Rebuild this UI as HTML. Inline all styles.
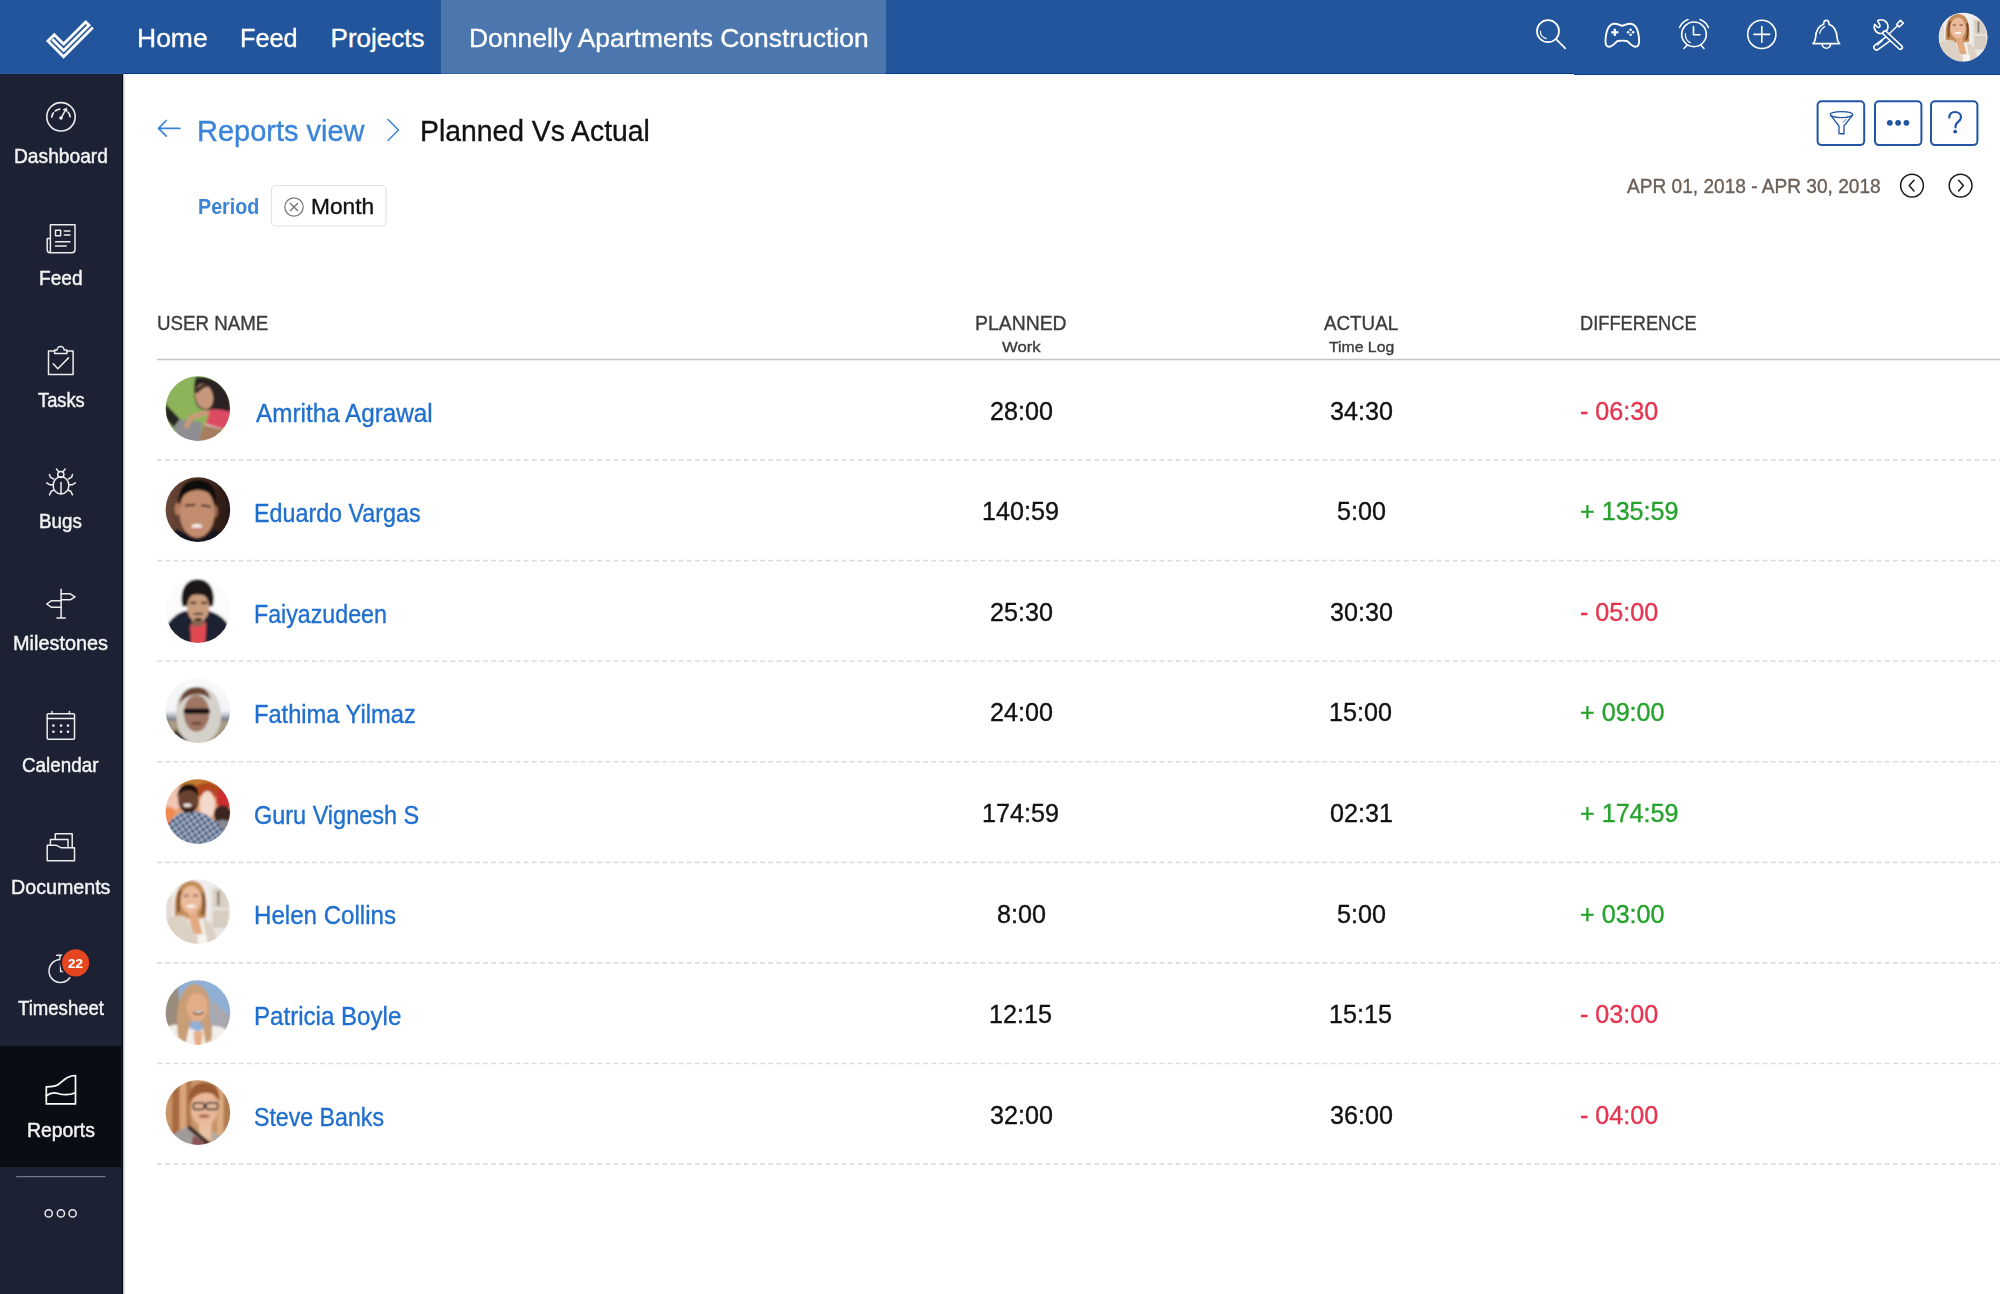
<!DOCTYPE html>
<html><head><meta charset="utf-8"><style>
html,body{margin:0;padding:0;}
body{width:2000px;height:1294px;position:relative;overflow:hidden;background:#fff;font-family:"Liberation Sans", sans-serif;}
.t span{position:absolute;white-space:nowrap;transform-origin:0 0;}
#ov{position:absolute;left:0;top:0;}
</style></head><body>
<div style="position:absolute;left:0;top:0;width:2000px;height:74px;background:#22559b"></div>
<div style="position:absolute;left:441px;top:0;width:444.5px;height:74px;background:#4b76ae"></div>
<div style="position:absolute;left:0;top:73px;width:123px;height:1px;background:#2461a9"></div>
<div style="position:absolute;left:123px;top:73px;width:1451px;height:1px;background:#063d8c"></div>
<div style="position:absolute;left:441px;top:73px;width:444px;height:1px;background:#3b66a3"></div>
<div style="position:absolute;left:1574px;top:74px;width:426px;height:1px;background:#063d8c"></div>
<div style="position:absolute;left:0;top:74px;width:123px;height:1220px;background:#1c2133"></div>
<div style="position:absolute;left:0;top:1046px;width:121px;height:121px;background:#0b0d14"></div>
<div style="position:absolute;left:122px;top:74px;width:1px;height:1220px;background:#03050e"></div>
<div style="position:absolute;left:123px;top:74px;width:2px;height:1220px;background:linear-gradient(to right,#b4b6bb,#f0f0f1)"></div>
<svg id="ov" width="2000" height="1294" viewBox="0 0 2000 1294">
<defs>
<clipPath id="cH"><circle cx="1963.1" cy="37.1" r="24.2"/></clipPath>
<clipPath id="a0"><circle cx="197.89" cy="408.62" r="32.3"/></clipPath>
<clipPath id="a1"><circle cx="197.89" cy="509.62" r="32.3"/></clipPath>
<clipPath id="a2"><circle cx="197.89" cy="610.62" r="32.3"/></clipPath>
<clipPath id="a3"><circle cx="197.89" cy="710.62" r="32.3"/></clipPath>
<clipPath id="a4"><circle cx="197.89" cy="811.62" r="32.3"/></clipPath>
<clipPath id="a5"><circle cx="197.89" cy="911.62" r="32.3"/></clipPath>
<clipPath id="a6"><circle cx="197.89" cy="1012.62" r="32.3"/></clipPath>
<clipPath id="a7"><circle cx="197.89" cy="1112.62" r="32.3"/></clipPath>
</defs>
<!-- logo -->
<path d="M92.8 27.6 L63.6 56.8 L47.9 41.1 L54.3 34.7 L63.6 44 L85.7 21.9 L89 25.2 L63.6 50.6 L52.3 39.3" fill="none" stroke="#fff" stroke-width="2.8" stroke-linejoin="miter"/>
<!-- header icons -->
<g fill="none" stroke="#fff" stroke-width="1.7" stroke-linecap="round" stroke-linejoin="round">
 <circle cx="1548" cy="31.2" r="11"/>
 <path d="M1556.3 39.3 L1565.3 48.3"/>
 <path d="M1540.3 31 A 8 8 0 0 0 1546.3 38.6" stroke-width="1.2"/>
 <path d="M1622.2 25.8 C1620 25.8 1618.5 23.7 1614.5 23.7 C1609 23.7 1606.5 30 1605.6 38 C1605 44 1606 46.8 1609 46.8 C1612.5 46.8 1615 43 1617.5 41 C1618.5 40.6 1620 40.6 1622.2 40.6 C1624.4 40.6 1626 40.6 1627 41 C1629.5 43 1632 46.8 1635.5 46.8 C1638.5 46.8 1639.6 44 1639 38 C1638.2 30 1635.5 23.7 1630 23.7 C1626 23.7 1624.4 25.8 1622.2 25.8 Z" stroke-width="1.9"/>
 <path d="M1611.2 32.3 H1618.4 M1614.8 28.7 V35.9" stroke-width="2.2" stroke-linecap="butt"/>
 <circle cx="1694" cy="34.3" r="12.3" stroke-width="1.6"/>
 <path d="M1679.5 27.5 A 15 15 0 0 1 1688 19.5 M1700 19.5 A 15 15 0 0 1 1708.5 27.5" stroke-width="1.5"/>
 <path d="M1684 48.5 L1687 45.2 M1704 48.5 L1701 45.2" stroke-width="1.5"/>
 <path d="M1693.5 26.5 V34.8 H1700" stroke-width="1.6"/>
 <path d="M1685.5 33.5 A 9 9 0 0 0 1690.5 42.8" stroke-width="1.1"/>
 <circle cx="1761.8" cy="34.4" r="14.1" stroke-width="1.6"/>
 <path d="M1754 34.4 H1769.6 M1761.8 26.6 V42.2" stroke-width="1.6"/>
 <path d="M1823.6 24.2 C1823.6 21.7 1824.8 20.3 1826.3 20.3 C1827.8 20.3 1829 21.7 1829 24.2 C1834 26 1836.8 31 1837 37.5 C1837.2 40.5 1838 42 1839.6 43.6 L1813 43.6 C1814.6 42 1815.4 40.5 1815.6 37.5 C1815.8 31 1818.6 26 1823.6 24.2 Z" stroke-width="1.7"/>
 <path d="M1822.2 44 A 4.2 4.2 0 0 0 1830.6 44" stroke-width="1.6"/>
 <path d="M1824.7 26.6 C1822.2 28 1820.5 30.5 1819.7 33.4" stroke-width="1.2"/>
</g>
<g fill="#fff">
 <circle cx="1630.6" cy="29.8" r="1.3"/><circle cx="1630.6" cy="34.8" r="1.3"/><circle cx="1628.1" cy="32.3" r="1.3"/><circle cx="1633.1" cy="32.3" r="1.3"/>
</g>
<!-- tools -->
<g stroke-linecap="round" fill="none" stroke-linejoin="round">
 <path d="M1888.3 38.6 L1876.6 47.2" stroke="#fff" stroke-width="7"/>
 <path d="M1888.3 38.6 L1876.6 47.2" stroke="#22559b" stroke-width="3.8"/>
 <path d="M1877.4 45.2 L1882.6 40.6" stroke="#fff" stroke-width="1.1"/>
 <path d="M1889.5 33.5 L1898 25.2" stroke="#fff" stroke-width="1.4"/>
 <path d="M1896.6 24.4 L1900.4 20.2 L1903.3 23.1 L1899.2 27 Z" stroke="#fff" stroke-width="1.5"/>
 <path d="M1874.6 24.3 L1877.3 27 C1878.8 28.3 1881 26.4 1879.7 24.6 L1877.6 20.7 A 6.9 6.9 0 1 1 1874.6 24.3 Z" stroke="#fff" stroke-width="1.6"/>
 <path d="M1885 33 L1900.3 47.3" stroke="#fff" stroke-width="5.6"/>
 <path d="M1885 33 L1900.3 47.3" stroke="#22559b" stroke-width="2.4"/>
</g>
<!-- header avatar -->
<circle cx="1963.1" cy="37.1" r="24.4" fill="#f0ece8"/>
<!-- sidebar icons -->
<g fill="none" stroke="#ececec" stroke-width="1.5" stroke-linecap="round" stroke-linejoin="round">
 <circle cx="61" cy="116.8" r="14.2" stroke-width="1.6"/>
 <path d="M51.79 117.01 A 9.3 9.3 0 0 1 53.38 112.97 M55.27 110.97 A 9.3 9.3 0 0 1 59.71 109.09 M68.12 112.32 A 9.3 9.3 0 0 1 70.16 116.69" stroke-width="1.7"/>
 <path d="M61.2 117.8 L66.3 108.6 M63.8 109.6 L66.3 108.6 L66.8 111.2" stroke-width="1.5"/>
 <path d="M50.4 252.7 V224.8 H75 V249.5 Q75 252.7 71.8 252.7 H49.8 Q47.2 252.7 47.2 249.8 V238.5 H50.4"/>
 <rect x="55.5" y="230.2" width="5.1" height="5.5"/>
 <path d="M64.3 231.1 H69.9 M64.3 235 H69.9 M55.5 241.8 H69.9 M55.5 245.9 H66.2"/>
 <path d="M54.6 351 H48.5 V374.4 H73.1 V351 H67"/>
 <path d="M54.6 353.5 V350 H57.1 A 3.5 3.5 0 0 1 64.1 350 H66.9 V353.5 Z"/>
 <path d="M53.2 363.7 L57.8 368.8 L68.5 357.9"/>
 <ellipse cx="61" cy="485.4" rx="7.85" ry="8.55"/>
 <circle cx="60.8" cy="474.5" r="3.1"/>
 <path d="M56.4 469 L58.7 471.7 M65.2 469 L62.9 471.7"/>
 <path d="M49.5 474.5 L50.4 477.2 L53.6 479 M72.5 474.5 L71.6 477.2 L68.4 479 M46.7 482.8 L49.5 484.7 L53.2 484.7 M75.3 482.8 L72.5 484.7 L68.8 484.7 M49.5 494.9 L51.3 491.2 L53.6 490.2 M72.5 494.9 L70.7 491.2 L68.4 490.2"/>
 <path d="M61 482.4 V493.5"/>
 <path d="M61.1 589.3 V617.9 M56.9 617.9 H65.2"/>
 <path d="M61.1 593.8 H70.3 L75 596.8 L70.3 599.8 H61.1 M61.1 600.8 H51.3 L46.7 604 L51.3 607.2 H61.1"/>
 <rect x="47.2" y="713.8" width="27.3" height="25.5" rx="1"/>
 <path d="M47.2 718.6 H74.5 M52 711.6 V713.8 M69.4 711.6 V713.8"/>
 <path d="M47.2 845.3 H56.4 L61.5 847.8 H74.5 V860.8 H47.2 Z"/>
 <path d="M50.4 845.3 V839.5 H68 V847.8 M55.3 839.5 V833.7 H72.2 V847.8"/>
 <circle cx="60.5" cy="971" r="11.5"/>
 <path d="M56.7 955.2 H63.2 M60 955.2 V959.5 M60.6 963 V971.5 H65"/>
 <path d="M46.3 1103.9 V1086.8 C52 1086.8 56 1086.5 59 1084 C64 1080 68 1075.5 75.5 1075.5 V1103.9 Z" stroke="#fff" stroke-width="1.7"/>
 <path d="M46.3 1095.7 C50 1093 54 1092.3 58 1093.5 C63 1095 69 1095.5 75.5 1092.8" stroke="#fff" stroke-width="1.7"/>
 <circle cx="48.7" cy="1213.4" r="3.6"/><circle cx="60.9" cy="1213.4" r="3.6"/><circle cx="72.6" cy="1213.4" r="3.6"/>
</g>
<g fill="#ececec">
 <circle cx="61" cy="118" r="1.8"/>
 <circle cx="53.4" cy="725.6" r="1.3"/><circle cx="61.1" cy="725.6" r="1.3"/><circle cx="68" cy="725.6" r="1.3"/>
 <circle cx="53.4" cy="731.8" r="1.3"/><circle cx="61.1" cy="731.8" r="1.3"/><circle cx="68" cy="731.8" r="1.3"/>
</g>
<path d="M16.2 1176.6 H105.5" stroke="#727784" stroke-width="1.2"/>
<circle cx="75.6" cy="962.8" r="14.6" fill="#e5461f" stroke="#1c2133" stroke-width="2"/>
<text x="75.6" y="967.6" fill="#fff" font-family="Liberation Sans" font-weight="700" font-size="13.5" text-anchor="middle">22</text>

<!-- breadcrumb icons -->
<g fill="none" stroke="#3a84d8" stroke-width="1.7" stroke-linecap="round" stroke-linejoin="round">
 <path d="M180 128.3 H158.5 M166.3 120.5 L158.5 128.3 L166.3 136.1"/>
 <path d="M388 119.5 L398.5 130 L388 140.5" stroke-width="1.5"/>
</g>
<!-- chip -->
<rect x="271.5" y="185.5" width="114.5" height="40.5" rx="4" fill="#fff" stroke="#e3e3e3" stroke-width="1.2"/>
<circle cx="294" cy="207" r="9.2" fill="none" stroke="#7a7a7a" stroke-width="1.2"/>
<path d="M290 203 L298 211 M298 203 L290 211" stroke="#6a6a6a" stroke-width="1.2"/>
<!-- buttons -->
<g fill="none" stroke="#2256a2" stroke-width="2">
 <rect x="1817.6" y="101.3" width="46.6" height="43.8" rx="4"/>
 <rect x="1875" y="101.3" width="46.4" height="43.8" rx="4"/>
 <rect x="1931" y="101.3" width="46.4" height="43.8" rx="4"/>
</g>
<g fill="none" stroke="#2256a2" stroke-width="1.3" stroke-linejoin="round">
 <ellipse cx="1841.5" cy="114.6" rx="11.3" ry="3"/>
 <path d="M1830.3 114.8 L1839 126 V133.5 L1844 134 V126 L1852.8 114.8"/>
 <path d="M1842.8 122.6 L1846.3 119" stroke-width="0.9"/>
</g>
<g fill="#2256a2">
 <circle cx="1889.8" cy="122.8" r="2.9"/><circle cx="1898.1" cy="122.8" r="2.9"/><circle cx="1906.4" cy="122.8" r="2.9"/>
 <circle cx="1955.2" cy="131.6" r="1.9"/>
</g>
<path d="M1949.3 117.6 C1949 114 1951.5 112 1955 112 C1958.8 112 1961 114.3 1961 117.3 C1961 121 1957.3 121.8 1955.9 124.6 L1955.4 127.3" fill="none" stroke="#2256a2" stroke-width="2.2" stroke-linecap="round"/>
<!-- date arrows -->
<g fill="none" stroke="#1a1a1a" stroke-width="1.5" stroke-linecap="round" stroke-linejoin="round">
 <circle cx="1912" cy="185.6" r="11.4"/>
 <path d="M1914 180.2 L1909.2 185.6 L1914 191"/>
 <circle cx="1960.6" cy="185.6" r="11.4"/>
 <path d="M1958.6 180.2 L1963.4 185.6 L1958.6 191"/>
</g>
<!-- table lines -->
<path d="M157 359.5 H2000" stroke="#c4c4c4" stroke-width="1.6"/>
<g stroke="#dcdcdc" stroke-width="1.6" stroke-dasharray="4.85 3.3">
 <path d="M157 460.1 H2000"/><path d="M157 560.6 H2000"/><path d="M157 661.2 H2000"/><path d="M157 761.8 H2000"/>
 <path d="M157 862.4 H2000"/><path d="M157 962.9 H2000"/><path d="M157 1063.5 H2000"/><path d="M157 1164.1 H2000"/>
</g>
<filter id="blr" x="-5%" y="-5%" width="110%" height="110%"><feGaussianBlur stdDeviation="18"/></filter>
<g clip-path="url(#cH)"><g transform="translate(1936.866 11.070) scale(0.040672)"><g filter="url(#blr)"><rect width="1294" height="1294" fill="#f1efed"/>
 <rect x="860" y="180" width="434" height="1114" fill="#e9e6e2"/>
 <rect x="920" y="220" width="290" height="350" fill="#d9d0c5"/>
 <rect x="920" y="610" width="290" height="330" fill="#d7cdc1"/>
 <rect x="1000" y="260" width="45" height="270" fill="#8a7a6a"/>
 <rect x="60" y="350" width="120" height="500" fill="#e2dcd4"/>
 <path d="M220 720 C190 400 250 90 520 70 C770 70 830 350 790 760 L640 770 L420 770 Z" fill="#c28c5a"/>
 <path d="M290 650 C280 450 300 300 330 250 M740 300 C770 450 760 600 720 700" stroke="#7a4a2a" stroke-width="50" fill="none"/>
 <polygon points="440,600 620,600 730,1060 560,1060" fill="#e2a880"/>
 <ellipse cx="520" cy="420" rx="190" ry="260" fill="#ebba9a"/>
 <path d="M70 790 C200 700 330 700 420 730 L600 1090 L790 1090 L740 780 C880 800 960 900 1010 1294 L50 1294 Z" fill="#dcd1c3"/>
 <rect x="640" y="1080" width="170" height="214" fill="#f6f4f0"/>
 <ellipse cx="520" cy="540" rx="85" ry="32" fill="#f8f0ea"/>
 <ellipse cx="430" cy="345" rx="50" ry="20" fill="#8a6a5a"/><ellipse cx="600" cy="345" rx="50" ry="20" fill="#8a6a5a"/></g></g></g>
<g clip-path="url(#a0)"><g transform="translate(163 374) scale(0.054096)"><g filter="url(#blr)"><rect width="1294" height="1294" fill="#8db45a"/>
 <polygon points="40,540 320,840 200,990 40,820" fill="#262626"/>
 <polygon points="190,990 310,840 720,890 700,1294 380,1294" fill="#8d8d92"/>
 <path d="M440 960 L520 800 L860 690" fill="none" stroke="#c99a78" stroke-width="95" stroke-linecap="round"/>
 <polygon points="640,1294 760,930 1100,1000 1000,1294" fill="#a77e5e"/>
 <path d="M780 930 L1100 1010" stroke="#e6e0da" stroke-width="28"/>
 <polygon points="790,920 870,660 1000,620 1294,600 1294,900 1100,1010" fill="#dc4c63"/>
 <path d="M600 60 C760 30 1020 90 1160 300 C1260 460 1260 620 1230 700 C1100 660 980 640 880 660 C760 690 660 650 620 560 C560 420 560 250 600 60 Z" fill="#2a2220"/>
 <ellipse cx="760" cy="420" rx="165" ry="235" transform="rotate(-12 760 420)" fill="#c6977a"/>
 <path d="M600 330 C640 200 760 170 860 220 C800 230 700 260 640 360 Z" fill="#2a2220"/></g></g></g>
<g clip-path="url(#a1)"><g transform="translate(163 475) scale(0.054096)"><g filter="url(#blr)"><defs><linearGradient id="g1" x1="0" x2="1"><stop offset="0" stop-color="#6e4a3a"/><stop offset="0.5" stop-color="#4e3226"/><stop offset="1" stop-color="#24140f"/></linearGradient></defs>
 <rect width="1294" height="1294" fill="url(#g1)"/>
 <path d="M120 1294 L230 1000 C400 1060 520 1160 645 1170 C800 1160 880 1060 960 980 L1180 1294 Z" fill="#171520"/>
 <ellipse cx="270" cy="630" rx="55" ry="115" fill="#b47c5e"/>
 <ellipse cx="965" cy="670" rx="50" ry="115" fill="#9a6448"/>
 <ellipse cx="630" cy="690" rx="325" ry="470" fill="#c28c6e"/>
 <path d="M290 540 C270 250 420 90 640 90 C880 90 1010 250 985 580 C950 420 880 285 640 275 C420 285 330 410 290 540 Z" fill="#0e0a0a"/>
 <path d="M420 565 L580 550 M720 560 L870 585" stroke="#3a2419" stroke-width="35" stroke-linecap="round"/>
 <ellipse cx="625" cy="945" rx="105" ry="38" fill="#f3ede8"/>
 <ellipse cx="630" cy="995" rx="70" ry="22" fill="#d8707e"/></g></g></g>
<g clip-path="url(#a2)"><g transform="translate(163 576) scale(0.054096)"><g filter="url(#blr)"><rect width="1294" height="1294" fill="#fbfbfb"/>
 <path d="M360 560 C300 300 400 60 640 60 C880 60 980 300 920 560 Z" fill="#1a1416"/>
 <path d="M90 880 C200 750 300 650 480 640 L820 640 C1000 680 1120 780 1190 880 L1190 1294 L90 1294 Z" fill="#1f2431"/>
 <polygon points="500,900 800,860 780,1294 520,1294" fill="#e04a50"/>
 <polygon points="520,760 780,760 760,920 540,940" fill="#8a6350"/>
 <ellipse cx="650" cy="580" rx="205" ry="270" fill="#c99c7e"/>
 <path d="M380 470 C360 260 450 120 640 120 C840 120 930 260 900 470 C860 380 760 340 640 340 C520 340 420 380 380 470 Z" fill="#1a1416"/>
 <ellipse cx="560" cy="495" rx="65" ry="28" fill="#6a4a3c"/>
 <ellipse cx="760" cy="495" rx="65" ry="28" fill="#6a4a3c"/>
 <ellipse cx="650" cy="700" rx="95" ry="22" fill="#4a3028"/>
 <ellipse cx="650" cy="810" rx="70" ry="32" fill="#2a1c18"/></g></g></g>
<g clip-path="url(#a3)"><g transform="translate(163 676) scale(0.054096)"><g filter="url(#blr)"><defs><linearGradient id="g3" x1="0" y1="0" x2="0" y2="1"><stop offset="0" stop-color="#fafafa"/><stop offset="0.5" stop-color="#f2f3f5"/><stop offset="0.56" stop-color="#b9c0c8"/><stop offset="0.62" stop-color="#7e7e86"/><stop offset="0.66" stop-color="#a79a84"/><stop offset="1" stop-color="#a89a84"/></linearGradient></defs>
 <rect width="1294" height="1294" fill="url(#g3)"/>
 <path d="M250 620 C250 300 450 200 650 200 C900 200 1050 400 1070 700 C1090 900 1000 1200 650 1290 C300 1210 230 900 250 620 Z" fill="#d4d0ca"/>
 <polygon points="230,980 440,1200 300,1294 180,1100" fill="#3a3432"/>
 <path d="M300 520 C330 290 480 210 620 210 C740 210 840 260 880 440 C800 350 700 330 600 340 C470 350 360 420 300 520 Z" fill="#6a4436"/>
 <ellipse cx="620" cy="690" rx="235" ry="335" fill="#9e7664"/>
 <rect x="380" y="600" width="490" height="100" rx="45" fill="#121212"/>
 <ellipse cx="620" cy="875" rx="105" ry="22" fill="#5a3a30"/></g></g></g>
<g clip-path="url(#a4)"><g transform="translate(163 777) scale(0.054096)"><g filter="url(#blr)"><defs><pattern id="p4" width="90" height="90" patternUnits="userSpaceOnUse" patternTransform="rotate(-35)"><rect width="90" height="90" fill="#3a5788"/><rect width="90" height="16" fill="#e6ecf4"/><rect width="16" height="90" fill="#e6ecf4"/><rect x="30" y="30" width="45" height="45" fill="#1c2a48"/></pattern></defs>
 <rect width="1294" height="1294" fill="#e4a070"/>
 <ellipse cx="200" cy="380" rx="190" ry="230" fill="#f2c4b2"/>
 <ellipse cx="120" cy="720" rx="120" ry="170" fill="#f08a50"/>
 <ellipse cx="620" cy="110" rx="300" ry="90" fill="#c47a30"/>
 <ellipse cx="840" cy="240" rx="260" ry="140" fill="#b24a1e"/>
 <ellipse cx="1130" cy="400" rx="150" ry="210" fill="#cc2e32"/>
 <ellipse cx="820" cy="520" rx="140" ry="260" fill="#f4d8cc"/>
 <ellipse cx="1100" cy="690" rx="160" ry="170" fill="#3a2620"/>
 <ellipse cx="1100" cy="950" rx="170" ry="160" fill="#8a8a92"/>
 <path d="M90 880 C200 700 350 620 500 620 C700 620 900 740 1060 880 L1220 1294 L90 1294 Z" fill="url(#p4)"/>
 <ellipse cx="470" cy="430" rx="190" ry="230" fill="#6a4232"/>
 <path d="M270 390 C250 200 380 130 470 130 C590 130 670 190 655 390 C620 280 560 245 470 245 C380 245 300 285 270 390 Z" fill="#1a100c"/>
 <path d="M300 470 C320 620 400 650 470 650 C560 650 630 610 650 470 C620 560 540 590 470 590 C400 590 330 560 300 470 Z" fill="#2a1810"/>
 <ellipse cx="450" cy="520" rx="75" ry="32" fill="#f4f0ea"/></g></g></g>
<g clip-path="url(#a5)"><g transform="translate(163 877) scale(0.054096)"><g filter="url(#blr)"><rect width="1294" height="1294" fill="#f1efed"/>
 <rect x="860" y="180" width="434" height="1114" fill="#e9e6e2"/>
 <rect x="920" y="220" width="290" height="350" fill="#d9d0c5"/>
 <rect x="920" y="610" width="290" height="330" fill="#d7cdc1"/>
 <rect x="1000" y="260" width="45" height="270" fill="#8a7a6a"/>
 <rect x="60" y="350" width="120" height="500" fill="#e2dcd4"/>
 <path d="M220 720 C190 400 250 90 520 70 C770 70 830 350 790 760 L640 770 L420 770 Z" fill="#c28c5a"/>
 <path d="M290 650 C280 450 300 300 330 250 M740 300 C770 450 760 600 720 700" stroke="#7a4a2a" stroke-width="50" fill="none"/>
 <polygon points="440,600 620,600 730,1060 560,1060" fill="#e2a880"/>
 <ellipse cx="520" cy="420" rx="190" ry="260" fill="#ebba9a"/>
 <path d="M70 790 C200 700 330 700 420 730 L600 1090 L790 1090 L740 780 C880 800 960 900 1010 1294 L50 1294 Z" fill="#dcd1c3"/>
 <rect x="640" y="1080" width="170" height="214" fill="#f6f4f0"/>
 <ellipse cx="520" cy="540" rx="85" ry="32" fill="#f8f0ea"/>
 <ellipse cx="430" cy="345" rx="50" ry="20" fill="#8a6a5a"/><ellipse cx="600" cy="345" rx="50" ry="20" fill="#8a6a5a"/></g></g></g>
<g clip-path="url(#a6)"><g transform="translate(163 978) scale(0.054096)"><g filter="url(#blr)"><rect width="1294" height="1294" fill="#8fb0d4"/>
 <polygon points="40,250 280,150 330,1000 40,950" fill="#9a8c7c"/>
 <polygon points="880,380 1294,760 1294,1050 940,960" fill="#a9a8ae"/>
 <path d="M90 900 C250 820 400 860 650 1000 C850 860 1000 860 1160 950 L1260 1294 L70 1294 Z" fill="#f3efea"/>
 <path d="M280 1100 C230 700 260 250 520 120 C760 90 890 300 870 600 C890 800 930 1000 890 1150 L780 1200 C760 1000 740 900 700 800 L520 800 C480 900 440 1100 420 1200 Z" fill="#c89e76"/>
 <polygon points="560,990 740,990 700,1294 600,1294" fill="#e6ac84"/>
 <ellipse cx="630" cy="540" rx="195" ry="265" fill="#e3ad89"/>
 <path d="M430 420 C470 250 560 220 640 230 C540 280 490 330 450 470 Z" fill="#c89e76"/>
 <ellipse cx="655" cy="640" rx="95" ry="40" fill="#5a3a30"/>
 <ellipse cx="655" cy="625" rx="80" ry="20" fill="#f0e6dc"/></g></g></g>
<g clip-path="url(#a7)"><g transform="translate(163 1078) scale(0.054096)"><g filter="url(#blr)"><rect width="1294" height="1294" fill="#c89468"/>
 <rect x="170" y="0" width="130" height="1294" fill="#a86a40"/>
 <rect x="320" y="0" width="110" height="1294" fill="#dba57c"/>
 <rect x="430" y="0" width="90" height="1294" fill="#b07850"/>
 <rect x="1000" y="0" width="120" height="1294" fill="#dbab82"/>
 <rect x="1120" y="0" width="174" height="1294" fill="#b27c52"/>
 <path d="M180 1060 C300 950 450 900 500 880 L860 1200 L860 1294 L180 1294 Z" fill="#a29c98"/>
 <polygon points="900,980 1120,1080 1100,1294 860,1294" fill="#b8aaa0"/>
 <polygon points="650,820 900,820 880,1170 680,1070" fill="#e8c2a2"/>
 <path d="M470 900 L850 1220" stroke="#3a2a24" stroke-width="75"/>
 <polygon points="560,1060 860,1260 700,1294 520,1294" fill="#8a5252"/>
 <ellipse cx="760" cy="560" rx="250" ry="330" fill="#e9b898"/>
 <path d="M480 490 C460 220 580 90 760 90 C960 90 1060 220 1045 430 C980 300 880 265 760 275 C640 285 540 360 480 490 Z" fill="#9a5a30"/>
 <g fill="none" stroke="#3a3030" stroke-width="30"><rect x="560" y="460" width="200" height="120" rx="40"/><rect x="800" y="460" width="210" height="120" rx="40"/><path d="M760 500 L800 500"/></g>
 <ellipse cx="760" cy="705" rx="105" ry="35" fill="#a86a58"/></g></g></g>
</svg>

<div class="t">
<span style="left:137.46px;top:24.59px;font-size:26px;line-height:26px;color:#ffffff;font-weight:400;transform:scaleX(1.0189);-webkit-text-stroke:0.35px #ffffff">Home</span>
<span style="left:240.05px;top:24.59px;font-size:26px;line-height:26px;color:#ffffff;font-weight:400;transform:scaleX(0.9730);-webkit-text-stroke:0.35px #ffffff">Feed</span>
<span style="left:330.60px;top:24.59px;font-size:26px;line-height:26px;color:#ffffff;font-weight:400;transform:scaleX(1.0000);-webkit-text-stroke:0.35px #ffffff">Projects</span>
<span style="left:468.97px;top:24.99px;font-size:26px;line-height:26px;color:#ffffff;font-weight:400;transform:scaleX(1.0166);-webkit-text-stroke:0.35px #ffffff">Donnelly Apartments Construction</span>
<span style="left:196.54px;top:116.02px;font-size:29.5px;line-height:29.5px;color:#3a84d8;font-weight:400;transform:scaleX(0.9821);-webkit-text-stroke:0.35px #3a84d8">Reports view</span>
<span style="left:419.60px;top:116.02px;font-size:29.5px;line-height:29.5px;color:#111111;font-weight:400;transform:scaleX(0.9598);-webkit-text-stroke:0.35px #111111">Planned Vs Actual</span>
<span style="left:197.63px;top:197.00px;font-size:21.5px;line-height:21.5px;color:#3a84d8;font-weight:700;transform:scaleX(0.9156);">Period</span>
<span style="left:311.15px;top:197.00px;font-size:21.5px;line-height:21.5px;color:#111111;font-weight:400;transform:scaleX(1.0573);-webkit-text-stroke:0.35px #111111">Month</span>
<span style="left:1627.00px;top:175.64px;font-size:20.5px;line-height:20.5px;color:#6b5e54;font-weight:400;transform:scaleX(0.9313);-webkit-text-stroke:0.35px #6b5e54">APR 01, 2018 - APR 30, 2018</span>
<span style="left:156.75px;top:313.46px;font-size:20.6px;line-height:20.6px;color:#3b3b3b;font-weight:400;transform:scaleX(0.9096);-webkit-text-stroke:0.35px #3b3b3b">USER NAME</span>
<span style="left:975.05px;top:313.36px;font-size:20.6px;line-height:20.6px;color:#3b3b3b;font-weight:400;transform:scaleX(0.9414);-webkit-text-stroke:0.35px #3b3b3b">PLANNED</span>
<span style="left:1324.36px;top:313.36px;font-size:20.6px;line-height:20.6px;color:#3b3b3b;font-weight:400;transform:scaleX(0.9130);-webkit-text-stroke:0.35px #3b3b3b">ACTUAL</span>
<span style="left:1580.24px;top:313.46px;font-size:20.6px;line-height:20.6px;color:#3b3b3b;font-weight:400;transform:scaleX(0.8860);-webkit-text-stroke:0.35px #3b3b3b">DIFFERENCE</span>
<span style="left:1002.00px;top:338.58px;font-size:15.5px;line-height:15.5px;color:#3b3b3b;font-weight:400;transform:scaleX(1.0769);-webkit-text-stroke:0.35px #3b3b3b">Work</span>
<span style="left:1329.35px;top:338.58px;font-size:15.5px;line-height:15.5px;color:#3b3b3b;font-weight:400;transform:scaleX(1.0183);-webkit-text-stroke:0.35px #3b3b3b">Time Log</span>
<span style="left:255.50px;top:400.53px;font-size:25px;line-height:25px;color:#1f6fcf;font-weight:400;transform:scaleX(0.9711);-webkit-text-stroke:0.35px #1f6fcf">Amritha Agrawal</span>
<span style="left:989.65px;top:398.69px;font-size:25.4px;line-height:25.4px;color:#111111;font-weight:400;transform:scaleX(0.9900);-webkit-text-stroke:0.35px #111111">28:00</span>
<span style="left:1329.89px;top:398.69px;font-size:25.4px;line-height:25.4px;color:#111111;font-weight:400;transform:scaleX(0.9900);-webkit-text-stroke:0.35px #111111">34:30</span>
<span style="left:1580.41px;top:398.69px;font-size:25.4px;line-height:25.4px;color:#e6344f;font-weight:400;transform:scaleX(0.9900);-webkit-text-stroke:0.35px #e6344f">- 06:30</span>
<span style="left:253.64px;top:501.10px;font-size:25px;line-height:25px;color:#1f6fcf;font-weight:400;transform:scaleX(0.9318);-webkit-text-stroke:0.35px #1f6fcf">Eduardo Vargas</span>
<span style="left:982.47px;top:499.26px;font-size:25.4px;line-height:25.4px;color:#111111;font-weight:400;transform:scaleX(0.9900);-webkit-text-stroke:0.35px #111111">140:59</span>
<span style="left:1336.82px;top:499.26px;font-size:25.4px;line-height:25.4px;color:#111111;font-weight:400;transform:scaleX(0.9900);-webkit-text-stroke:0.35px #111111">5:00</span>
<span style="left:1580.41px;top:499.26px;font-size:25.4px;line-height:25.4px;color:#25a22c;font-weight:400;transform:scaleX(0.9900);-webkit-text-stroke:0.35px #25a22c">+ 135:59</span>
<span style="left:253.64px;top:601.67px;font-size:25px;line-height:25px;color:#1f6fcf;font-weight:400;transform:scaleX(0.9283);-webkit-text-stroke:0.35px #1f6fcf">Faiyazudeen</span>
<span style="left:989.65px;top:599.83px;font-size:25.4px;line-height:25.4px;color:#111111;font-weight:400;transform:scaleX(0.9900);-webkit-text-stroke:0.35px #111111">25:30</span>
<span style="left:1329.89px;top:599.83px;font-size:25.4px;line-height:25.4px;color:#111111;font-weight:400;transform:scaleX(0.9900);-webkit-text-stroke:0.35px #111111">30:30</span>
<span style="left:1580.41px;top:599.83px;font-size:25.4px;line-height:25.4px;color:#e6344f;font-weight:400;transform:scaleX(0.9900);-webkit-text-stroke:0.35px #e6344f">- 05:00</span>
<span style="left:253.61px;top:702.24px;font-size:25px;line-height:25px;color:#1f6fcf;font-weight:400;transform:scaleX(0.9464);-webkit-text-stroke:0.35px #1f6fcf">Fathima Yilmaz</span>
<span style="left:989.65px;top:700.40px;font-size:25.4px;line-height:25.4px;color:#111111;font-weight:400;transform:scaleX(0.9900);-webkit-text-stroke:0.35px #111111">24:00</span>
<span style="left:1329.40px;top:700.40px;font-size:25.4px;line-height:25.4px;color:#111111;font-weight:400;transform:scaleX(0.9900);-webkit-text-stroke:0.35px #111111">15:00</span>
<span style="left:1580.41px;top:700.40px;font-size:25.4px;line-height:25.4px;color:#25a22c;font-weight:400;transform:scaleX(0.9900);-webkit-text-stroke:0.35px #25a22c">+ 09:00</span>
<span style="left:254.33px;top:802.81px;font-size:25px;line-height:25px;color:#1f6fcf;font-weight:400;transform:scaleX(0.9381);-webkit-text-stroke:0.35px #1f6fcf">Guru Vignesh S</span>
<span style="left:982.47px;top:800.97px;font-size:25.4px;line-height:25.4px;color:#111111;font-weight:400;transform:scaleX(0.9900);-webkit-text-stroke:0.35px #111111">174:59</span>
<span style="left:1330.02px;top:800.97px;font-size:25.4px;line-height:25.4px;color:#111111;font-weight:400;transform:scaleX(0.9900);-webkit-text-stroke:0.35px #111111">02:31</span>
<span style="left:1580.41px;top:800.97px;font-size:25.4px;line-height:25.4px;color:#25a22c;font-weight:400;transform:scaleX(0.9900);-webkit-text-stroke:0.35px #25a22c">+ 174:59</span>
<span style="left:253.57px;top:903.38px;font-size:25px;line-height:25px;color:#1f6fcf;font-weight:400;transform:scaleX(0.9640);-webkit-text-stroke:0.35px #1f6fcf">Helen Collins</span>
<span style="left:996.82px;top:901.54px;font-size:25.4px;line-height:25.4px;color:#111111;font-weight:400;transform:scaleX(0.9900);-webkit-text-stroke:0.35px #111111">8:00</span>
<span style="left:1336.82px;top:901.54px;font-size:25.4px;line-height:25.4px;color:#111111;font-weight:400;transform:scaleX(0.9900);-webkit-text-stroke:0.35px #111111">5:00</span>
<span style="left:1580.41px;top:901.54px;font-size:25.4px;line-height:25.4px;color:#25a22c;font-weight:400;transform:scaleX(0.9900);-webkit-text-stroke:0.35px #25a22c">+ 03:00</span>
<span style="left:253.57px;top:1003.95px;font-size:25px;line-height:25px;color:#1f6fcf;font-weight:400;transform:scaleX(0.9636);-webkit-text-stroke:0.35px #1f6fcf">Patricia Boyle</span>
<span style="left:989.40px;top:1002.11px;font-size:25.4px;line-height:25.4px;color:#111111;font-weight:400;transform:scaleX(0.9900);-webkit-text-stroke:0.35px #111111">12:15</span>
<span style="left:1329.40px;top:1002.11px;font-size:25.4px;line-height:25.4px;color:#111111;font-weight:400;transform:scaleX(0.9900);-webkit-text-stroke:0.35px #111111">15:15</span>
<span style="left:1580.41px;top:1002.11px;font-size:25.4px;line-height:25.4px;color:#e6344f;font-weight:400;transform:scaleX(0.9900);-webkit-text-stroke:0.35px #e6344f">- 03:00</span>
<span style="left:254.34px;top:1104.52px;font-size:25px;line-height:25px;color:#1f6fcf;font-weight:400;transform:scaleX(0.9259);-webkit-text-stroke:0.35px #1f6fcf">Steve Banks</span>
<span style="left:989.89px;top:1102.68px;font-size:25.4px;line-height:25.4px;color:#111111;font-weight:400;transform:scaleX(0.9900);-webkit-text-stroke:0.35px #111111">32:00</span>
<span style="left:1329.89px;top:1102.68px;font-size:25.4px;line-height:25.4px;color:#111111;font-weight:400;transform:scaleX(0.9900);-webkit-text-stroke:0.35px #111111">36:00</span>
<span style="left:1580.41px;top:1102.68px;font-size:25.4px;line-height:25.4px;color:#e6344f;font-weight:400;transform:scaleX(0.9900);-webkit-text-stroke:0.35px #e6344f">- 04:00</span>
<span style="left:13.81px;top:146.34px;font-size:20.5px;line-height:20.5px;color:#f4f4f4;font-weight:400;transform:scaleX(0.9368);-webkit-text-stroke:0.45px #f4f4f4">Dashboard</span>
<span style="left:38.97px;top:268.04px;font-size:20.5px;line-height:20.5px;color:#f4f4f4;font-weight:400;transform:scaleX(0.9326);-webkit-text-stroke:0.45px #f4f4f4">Feed</span>
<span style="left:37.70px;top:389.74px;font-size:20.5px;line-height:20.5px;color:#f4f4f4;font-weight:400;transform:scaleX(0.8917);-webkit-text-stroke:0.45px #f4f4f4">Tasks</span>
<span style="left:39.15px;top:511.44px;font-size:20.5px;line-height:20.5px;color:#f4f4f4;font-weight:400;transform:scaleX(0.9153);-webkit-text-stroke:0.45px #f4f4f4">Bugs</span>
<span style="left:13.00px;top:633.14px;font-size:20.5px;line-height:20.5px;color:#f4f4f4;font-weight:400;transform:scaleX(0.9696);-webkit-text-stroke:0.45px #f4f4f4">Milestones</span>
<span style="left:22.43px;top:754.84px;font-size:20.5px;line-height:20.5px;color:#f4f4f4;font-weight:400;transform:scaleX(0.9183);-webkit-text-stroke:0.45px #f4f4f4">Calendar</span>
<span style="left:10.77px;top:876.54px;font-size:20.5px;line-height:20.5px;color:#f4f4f4;font-weight:400;transform:scaleX(0.9590);-webkit-text-stroke:0.45px #f4f4f4">Documents</span>
<span style="left:17.85px;top:998.24px;font-size:20.5px;line-height:20.5px;color:#f4f4f4;font-weight:400;transform:scaleX(0.9061);-webkit-text-stroke:0.45px #f4f4f4">Timesheet</span>
<span style="left:26.59px;top:1119.94px;font-size:20.5px;line-height:20.5px;color:#f4f4f4;font-weight:400;transform:scaleX(0.9458);-webkit-text-stroke:0.45px #f4f4f4">Reports</span>
</div>
</body></html>
